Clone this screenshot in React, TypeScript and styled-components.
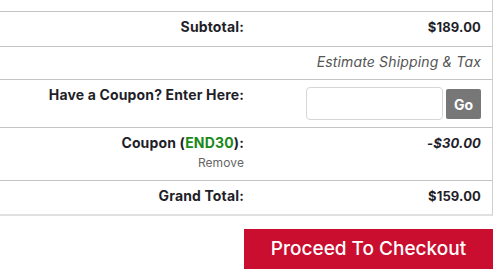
import React from "react";
import styled, { createGlobalStyle } from "styled-components";

const Global = createGlobalStyle`
  html, body { margin: 0; padding: 0; background: #fff; }
  body { font-family: Inter, "Noto Sans", sans-serif; color: #222; }
`;

const Page = styled.div`
  width: 500px;
  height: 269px;
  overflow: hidden;
`;

const Table = styled.div`
  width: 492px;
  border-right: 1px solid #cfcfcf;
  border-bottom: 2px solid #e0e0e0;
`;

const Row = styled.div<{ $h: number; $top?: boolean }>`
  display: grid;
  grid-template-columns: 254px 1fr;
  height: ${(p) => p.$h}px;
  box-sizing: border-box;
  border-top: ${(p) => (p.$top ? "none" : "1px solid #c4c4c4")};
`;

const Label = styled.div`
  text-align: right;
  padding: 6px 10px 0 0;
  font-size: 14px;
  font-weight: 700;
  line-height: 18px;
  letter-spacing: 0.15px;
  color: #1f1f2a;
`;

const Value = styled.div<{ $italic?: boolean; $bold?: boolean }>`
  display: flex;
  justify-content: flex-end;
  align-items: flex-start;
  gap: 3px;
  padding: 6px 11px 0 0;
  font-size: ${(p) => (p.$bold ? 13 : 14)}px;
  line-height: 18px;
  font-weight: ${(p) => (p.$bold ? 700 : 400)};
  font-style: ${(p) => (p.$italic ? "italic" : "normal")};
  color: ${(p) => (p.$bold ? "#1f1f2a" : "#555")};
  letter-spacing: 0.15px;
`;

const Code = styled.span`
  color: #1a8a1a;
`;

const Remove = styled.div`
  margin-top: 3px;
  font-size: 12px;
  font-weight: 400;
  color: #666;
  line-height: 16px;
  letter-spacing: 0.1px;
`;

const CouponInput = styled.input`
  box-sizing: border-box;
  width: 137px;
  height: 33px;
  margin-top: 1px;
  border: 1px solid #d6d6d6;
  border-radius: 4px;
  background: #fff;
  outline: none;
`;

const GoButton = styled.button`
  box-sizing: border-box;
  width: 35px;
  height: 30px;
  margin-top: 3px;
  border: none;
  border-radius: 2px;
  background: #777;
  color: #fff;
  font-family: Inter, sans-serif;
  font-weight: 700;
  font-size: 14px;
  padding: 0;
`;

const Actions = styled.div`
  width: 493px;
  display: flex;
  justify-content: flex-end;
  padding-top: 13px;
`;

const Checkout = styled.button`
  width: 249px;
  height: 40px;
  border: none;
  background: #c90e2f;
  color: #fff;
  font-family: Inter, sans-serif;
  font-size: 19px;
  font-weight: 500;
  padding: 0 0 2px;
`;

export default function App() {
  return (
    <Page>
      <Global />
      <Table>
        <Row $h={11} $top />
        <Row $h={35}>
          <Label>Subtotal:</Label>
          <Value $bold>$189.00</Value>
        </Row>
        <Row $h={33}>
          <div />
          <Value $italic>Estimate Shipping &amp; Tax</Value>
        </Row>
        <Row $h={48}>
          <Label>Have a Coupon? Enter Here:</Label>
          <Value>
            <CouponInput aria-label="Coupon code" />
            <GoButton>Go</GoButton>
          </Value>
        </Row>
        <Row $h={53}>
          <Label>
            Coupon (<Code>END30</Code>):
            <Remove>Remove</Remove>
          </Label>
          <Value $bold $italic>-$30.00</Value>
        </Row>
        <Row $h={34}>
          <Label>Grand Total:</Label>
          <Value $bold>$159.00</Value>
        </Row>
      </Table>
      <Actions>
        <Checkout>Proceed To Checkout</Checkout>
      </Actions>
    </Page>
  );
}
